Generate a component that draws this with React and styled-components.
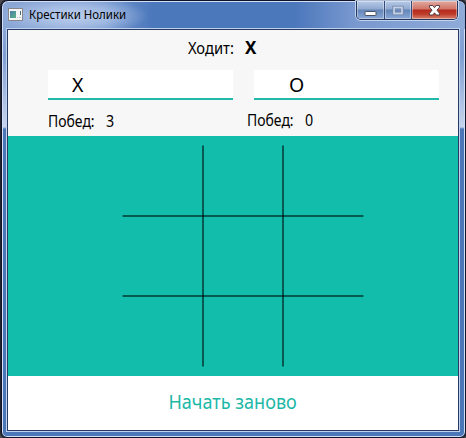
import React from 'react';
import styled, { createGlobalStyle } from 'styled-components';

const TEAL = '#13bdac';

const GlobalStyle = createGlobalStyle`
  * { box-sizing: border-box; }
  body { margin: 0; background: #4b4a50; overflow: hidden; }
`;

const WindowFrame = styled.div`
  width: 465px;
  height: 438px;
  margin-left: 1px;
  display: flex;
  flex-direction: column;
  padding: 0 5px 5px 4px;
  border: 1px solid #10142a;
  border-radius: 7px 7px 6px 6px;
  box-shadow: inset 0 0 0 1px #d3e0f3, 0 0 0 1px #23242c;
  background:
    linear-gradient(180deg, #8aa6d6 0, #8aa6d6 28px, #7f9fd3 55px, #c6d4ec 126px, #4b76b8 128px, #4b76b8 100%);
  font-family: 'Noto Sans', 'Open Sans', sans-serif;
  color: #000;
`;

const TitleBar = styled.header`
  flex: 0 0 27px;
  margin: 1px 0 0 -2px;
  padding-left: 4px;
  width: 461px;
  display: flex;
  align-items: flex-start;
  border-radius: 5px 5px 0 0;
  background:
    radial-gradient(ellipse 74px 20px at 70px 14px, rgba(205, 220, 243, 0.8) 0, rgba(190, 208, 238, 0.6) 50%, rgba(160, 185, 226, 0) 100%),
    linear-gradient(90deg, #8ba7d6 0, #7296cf 100px, #4b77bb 150px, #4b77bb 290px, #7898cf 350px, #8fabd8 100%);
`;

const AppIcon = styled.svg`
  flex: none;
  margin-top: 6px;
`;

const Caption = styled.div`
  flex: 1;
  margin: 4px 0 0 6px;
  font-size: 12px;
  line-height: 17px;
  white-space: nowrap;
  transform: scaleX(0.955);
  transform-origin: left;
`;

const Controls = styled.div`
  flex: none;
  display: flex;
  height: 19px;
  margin: -1px 7px 0 0;
  border: 1px solid #27375c;
  border-top: 0;
  border-radius: 0 0 5px 5px;
  box-shadow: 0 0 0 1px rgba(205, 221, 245, 0.85);
  overflow: hidden;
`;

const ControlButton = styled.button`
  width: ${(p) => p.$width}px;
  height: 18px;
  padding: 0;
  border: 0;
  border-left: ${(p) => (p.$first ? '0' : '1px solid #354a76')};
  box-shadow: inset 0 0 0 1px rgba(255, 255, 255, 0.38);
  background: ${(p) =>
    p.$close
      ? 'linear-gradient(180deg, #e0aaa2 0, #cf7466 8px, #b52b1d 9px, #bd3b29 13px, #d78470 100%)'
      : 'linear-gradient(180deg, #b8cae7 0, #91aad0 8px, #6385b8 9px, #8aa9d8 100%)'};
  svg { display: block; margin: 0 auto; }
`;

const Client = styled.main`
  flex: 0 0 402px;
  width: 452px;
  margin-left: 1px;
  display: flex;
  flex-direction: column;
  border: 1px solid #263a63;
  box-shadow: 0 0 0 1px #c0d2ed;
  background: #fff;
`;

const ScorePanel = styled.section`
  flex: 0 0 106px;
  background: #f7f7f7;
`;

const TurnRow = styled.div`
  display: flex;
  height: 40px;
  padding: 8px 0 0 180px;
  font-size: 15.5px;
  line-height: 20px;
`;

const Label = styled.span`
  width: ${(p) => p.$width}px;
  transform: scaleX(${(p) => p.$stretch});
  transform-origin: left;
`;

const TurnMark = styled.strong`
  font-size: 17px;
  line-height: 20px;
  font-weight: 700;
`;

const NameRow = styled.div`
  display: grid;
  grid-template-columns: 185px 185px;
  column-gap: 21px;
  padding-left: 40px;
`;

const NameField = styled.div`
  height: 30px;
  padding-left: ${(p) => p.$indent}px;
  border-bottom: 2px solid #22b8aa;
  background: #fff;
  font-size: 19.5px;
  line-height: 30px;
`;

const WinsRow = styled.div`
  display: flex;
  padding: 11px 0 0 40px;
  font-size: 15.5px;
  line-height: 20px;
`;

const Wins = styled.div`
  display: flex;
  width: 199px;
  margin-top: ${(p) => p.$lift}px;
`;

const WinCount = styled.span`
  transform: scaleX(0.92);
  transform-origin: left;
`;

const Board = styled.section`
  flex: 0 0 240px;
  background: ${TEAL};
  svg { display: block; }
`;

const RestartBar = styled.footer`
  flex: 1;
  display: flex;
  justify-content: center;
  padding-top: 12px;
`;

const RestartButton = styled.button`
  height: 28px;
  padding: 0;
  border: 0;
  background: none;
  color: #1cb8a8;
  font: 19px/28px 'Noto Sans', 'Open Sans', sans-serif;
  white-space: nowrap;
  transform: scaleX(0.95);
`;

function WindowIcon() {
  return (
    <AppIcon width="15" height="13" viewBox="0 0 15 13">
      <defs>
        <linearGradient id="picture" x1="0" y1="0" x2="1" y2="1">
          <stop offset="0" stopColor="#4a7fa8" />
          <stop offset="1" stopColor="#58b487" />
        </linearGradient>
      </defs>
      <rect x="0.5" y="0.5" width="14" height="12" fill="#f4f6f5" stroke="#87868c" />
      <rect x="2" y="3" width="6" height="7" fill="url(#picture)" />
      <path d="M12.5 3v4" stroke="#536a78" />
      <path d="M9 9.5h1M11 9.5h2" stroke="#bfc5c6" />
    </AppIcon>
  );
}

function MinimizeIcon() {
  return (
    <svg width="13" height="18" viewBox="0 0 13 18">
      <rect x="1" y="10.5" width="11" height="4" rx="0.5" fill="#fff" stroke="#4a5263" />
    </svg>
  );
}

function MaximizeIcon() {
  return (
    <svg width="12" height="18" viewBox="0 0 12 18">
      <rect x="2" y="6.5" width="8" height="6" fill="none" stroke="#7289ad" strokeWidth="3.4" />
      <rect x="2" y="6.5" width="8" height="6" fill="none" stroke="#c2cfe4" strokeWidth="1.8" />
    </svg>
  );
}

function CloseIcon() {
  return (
    <svg width="13" height="18" viewBox="0 0 13 18">
      <path d="M1.5 4.5h3.4l1.6 2.2 1.6-2.2h3.4v1.7L9 9.2l2.5 3.1V14H8.1l-1.6-2.2L4.9 14H1.5v-1.7L4 9.2 1.5 6.2z" fill="#fff" stroke="#553c46" strokeWidth="1" />
    </svg>
  );
}

function Grid() {
  return (
    <svg width="450" height="240" viewBox="0 0 450 240" stroke="#000" strokeOpacity="0.53" strokeWidth="2">
      <path d="M195 9.5V230.5" />
      <path d="M275 9.5V230.5" />
      <path d="M114.5 80H355.5" />
      <path d="M114.5 160H355.5" />
    </svg>
  );
}

export default function App() {
  return (
    <>
      <GlobalStyle />
      <WindowFrame>
        <TitleBar>
          <WindowIcon />
          <Caption>Крестики Нолики</Caption>
          <Controls>
            <ControlButton $width={27} $first aria-label="Свернуть"><MinimizeIcon /></ControlButton>
            <ControlButton $width={27} aria-label="Развернуть"><MaximizeIcon /></ControlButton>
            <ControlButton $width={46} $close aria-label="Закрыть"><CloseIcon /></ControlButton>
          </Controls>
        </TitleBar>
        <Client>
          <ScorePanel>
            <TurnRow>
              <Label $width={57} $stretch={0.95}>Ходит:</Label>
              <TurnMark>X</TurnMark>
            </TurnRow>
            <NameRow>
              <NameField $indent={24}>X</NameField>
              <NameField $indent={35}>O</NameField>
            </NameRow>
            <WinsRow>
              <Wins $lift={0}><Label $width={58} $stretch={0.9}>Побед:</Label><WinCount>3</WinCount></Wins>
              <Wins $lift={-1}><Label $width={58} $stretch={0.9}>Побед:</Label><WinCount>0</WinCount></Wins>
            </WinsRow>
          </ScorePanel>
          <Board><Grid /></Board>
          <RestartBar>
            <RestartButton>Начать заново</RestartButton>
          </RestartBar>
        </Client>
      </WindowFrame>
    </>
  );
}
